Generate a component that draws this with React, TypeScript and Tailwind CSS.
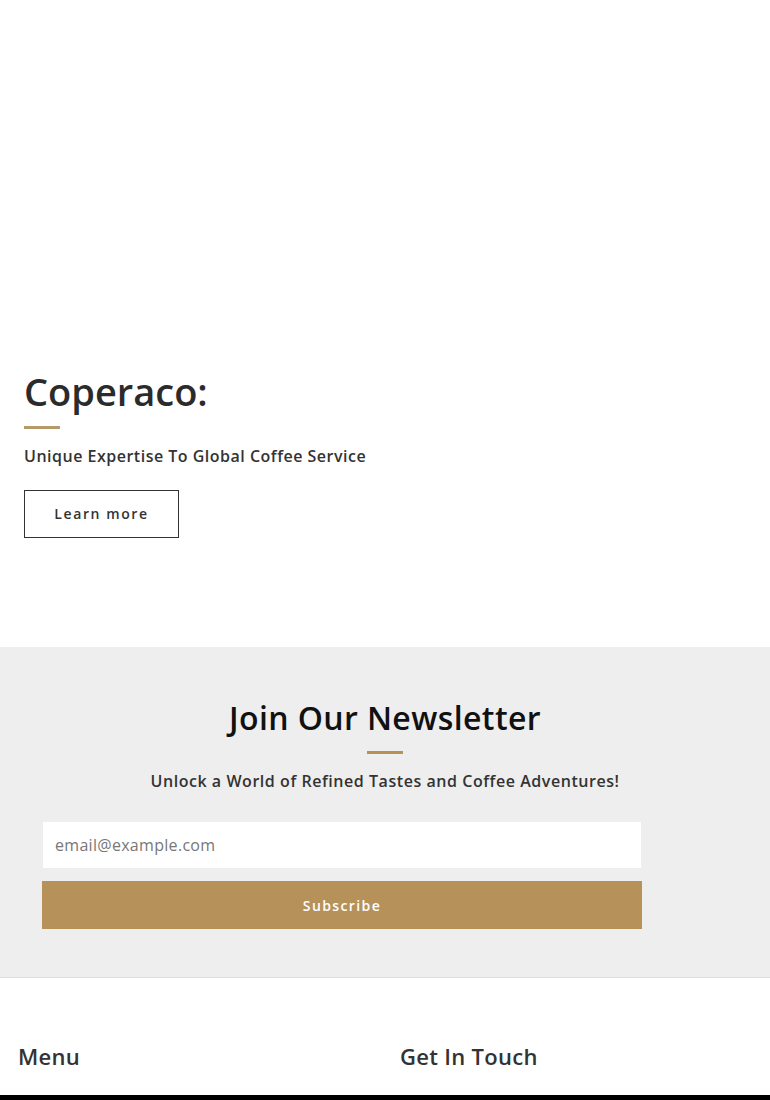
import React from 'react';

const font = { fontFamily: '"Open Sans", "Liberation Sans", sans-serif' };

export default function App() {
  return (
    <div className="w-[770px] bg-white text-[#333]" style={font}>
      {/* hero */}
      <section className="h-[647px] flex flex-col justify-end px-6 pb-[109px]">
        <h1 className="text-[38px] leading-[48px] font-semibold text-[#2b2b2b]">Coperaco:</h1>
        <div className="mt-[11px] w-9 h-[3px] bg-[#b39a68]" />
        <p className="mt-[15px] text-[16px] leading-6 font-semibold tracking-[0.5px] text-[#333]">
          Unique Expertise To Global Coffee Service
        </p>
        <div className="mt-[22px]">
          <button className="w-[155px] h-12 border border-[#333] text-[14px] font-semibold tracking-[1.6px] text-[#333] pb-[2px]">
            Learn more
          </button>
        </div>
      </section>

      {/* newsletter */}
      <section className="h-[331px] bg-[#eeeeee] border-b border-[#dddddd] flex flex-col items-center pt-[51px]">
        <h2 className="text-[32px] leading-[40px] font-semibold tracking-[0.4px] text-[#111]">Join Our Newsletter</h2>
        <div className="mt-[13px] w-9 h-[3px] bg-[#b6925a]" />
        <p className="mt-[15px] text-[16px] leading-6 font-semibold tracking-[0.55px] text-[#333]">
          Unlock a World of Refined Tastes and Coffee Adventures!
        </p>
        <div className="self-start ml-[42px] mt-[29px] w-[600px] flex flex-col gap-[13px]">
          <input
            className="mx-px h-[46px] bg-white px-3 text-[16px] tracking-[0.3px] placeholder:text-[#777] outline-none"
            placeholder="email@example.com"
          />
          <button className="h-12 bg-[#b6925a] text-white text-[14px] font-semibold tracking-[1.4px]">
            Subscribe
          </button>
        </div>
      </section>

      {/* footer */}
      <footer>
        <div className="h-[117px] grid grid-cols-2 items-end pb-[25px]">
          <h3 className="pl-[18px] text-[22px] leading-7 font-semibold tracking-[0.3px] text-[#333]">Menu</h3>
          <h3 className="pl-[15px] text-[22px] leading-7 font-semibold tracking-[0.3px] text-[#333]">Get In Touch</h3>
        </div>
        <div className="h-[20px] bg-black" />
      </footer>
    </div>
  );
}
